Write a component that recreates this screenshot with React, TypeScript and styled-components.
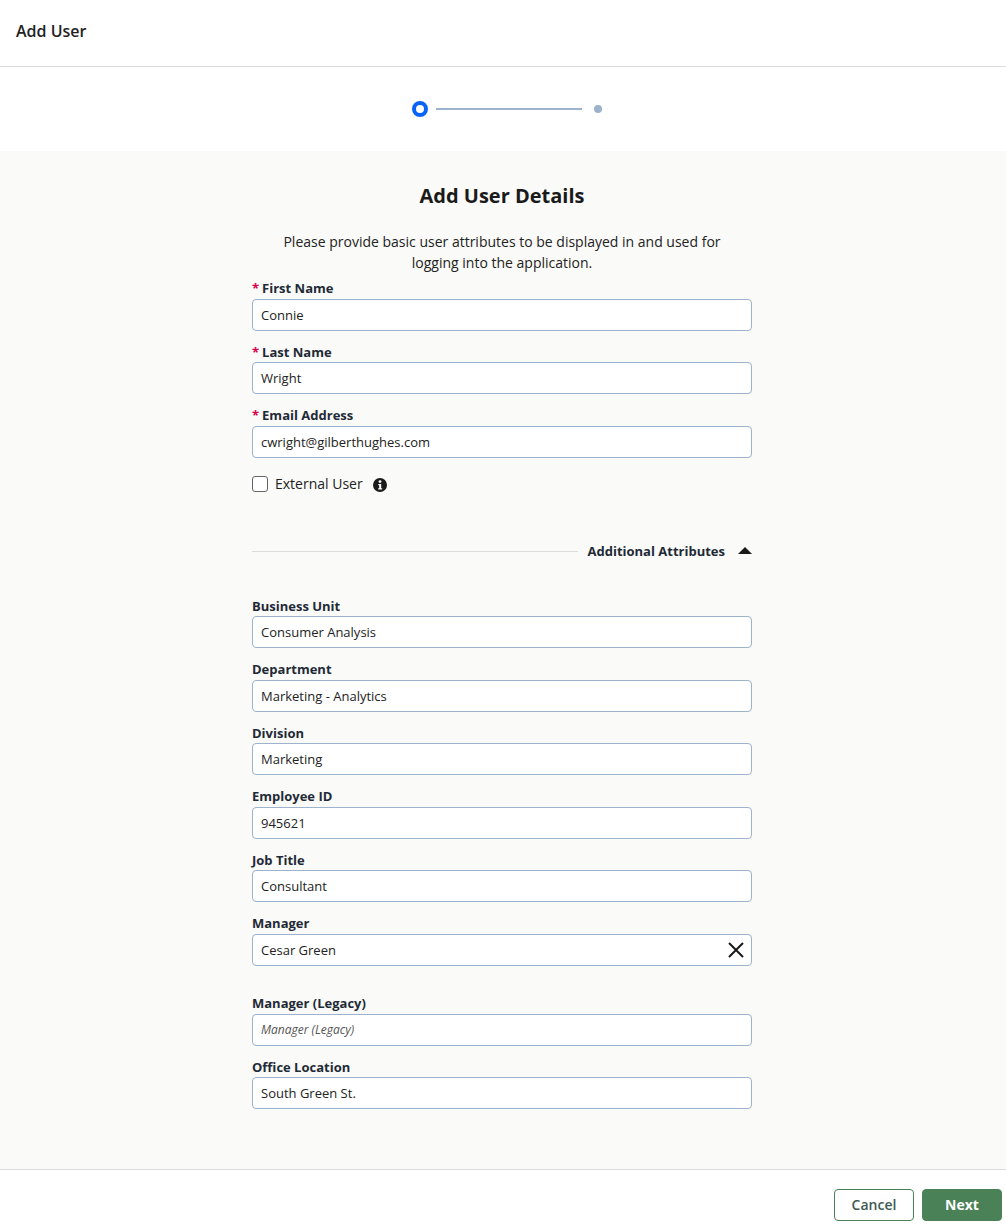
import styled, { createGlobalStyle } from "styled-components";

const GlobalStyle = createGlobalStyle`
  html, body {
    margin: 0;
    padding: 0;
    background: #fff;
    font-family: "Open Sans", "Noto Sans", sans-serif;
    color: #1a1a1a;
  }
  * { box-sizing: border-box; }
`;

const Page = styled.div`
  width: 1006px;
  height: 1232px;
  display: flex;
  flex-direction: column;
`;

const Header = styled.header`
  height: 67px;
  padding: 0 16px;
  display: flex;
  align-items: center;
  border-bottom: 1px solid #dcdcdc;
  font-size: 16px;
  font-weight: 600;
  padding-bottom: 5px;
  color: #222;
`;

const Stepper = styled.div`
  height: 84px;
  display: flex;
  align-items: center;
  justify-content: center;
  padding-left: 7px;
`;

const ActiveDot = styled.span`
  width: 16px;
  height: 16px;
  border-radius: 50%;
  border: 4px solid #0b63f6;
  background: #fff;
`;

const StepLine = styled.span`
  width: 146px;
  height: 2px;
  margin: 0 12px 0 8px;
  background: #9db2cc;
`;

const NextDot = styled.span`
  width: 8px;
  height: 8px;
  border-radius: 50%;
  background: #9db2cc;
`;

const Body = styled.main`
  flex: 1;
  padding-right: 2px;
  background: #fafaf8;
  display: flex;
  flex-direction: column;
  align-items: center;
`;

const Form = styled.div`
  width: 500px;
`;

const Title = styled.h1`
  margin: 31px 0 0;
  font-size: 20px;
  line-height: 28px;
  font-weight: 700;
  text-align: center;
  color: #1a1a1a;
`;

const Intro = styled.p`
  margin: 21px 0 6px;
  font-size: 14px;
  line-height: 21px;
  text-align: center;
  color: #222;
`;

const Field = styled.div<{ $gap?: number }>`
  height: 63.5px;
  margin-top: ${(p) => p.$gap ?? 0}px;
`;

const Label = styled.label`
  display: block;
  height: 19.5px;
  font-size: 13px;
  line-height: 18px;
  font-weight: 700;
  color: #1f2a37;
`;

const Star = styled.span`
  color: #d6004b;
  margin-right: 3px;
`;

const InputBox = styled.div<{ $placeholder?: boolean }>`
  height: 32px;
  padding: 0 8px;
  display: flex;
  align-items: center;
  justify-content: space-between;
  background: #fff;
  border: 1px solid #9db2cc;
  border-radius: 4px;
  font-size: ${(p) => (p.$placeholder ? "12px" : "13px")};
  font-style: ${(p) => (p.$placeholder ? "italic" : "normal")};
  color: ${(p) => (p.$placeholder ? "#555" : "#222")};
`;

const ClearIcon = styled.svg`
  width: 18px;
  height: 18px;
  margin-right: -2px;
`;

const CheckRow = styled.div`
  height: 20px;
  margin-top: 4px;
  display: flex;
  align-items: center;
  font-size: 14px;
  color: #222;
`;

const CheckBox = styled.span`
  width: 16px;
  height: 16px;
  margin-right: 7px;
  background: #fff;
  border: 1px solid #666;
  border-radius: 3px;
`;

const InfoIcon = styled.svg`
  width: 14px;
  height: 14px;
  margin: 2px 0 0 10px;
`;

const Divider = styled.div`
  height: 20px;
  margin: 47px 0 36px;
  display: flex;
  align-items: center;
`;

const Rule = styled.span`
  flex: 1;
  height: 1px;
  margin-top: 1px;
  background: #dcdcdc;
`;

const DividerLabel = styled.span`
  margin: 0 13px 0 10px;
  font-size: 13px;
  font-weight: 700;
  color: #1f2a37;
`;

const Caret = styled.span`
  width: 0;
  height: 0;
  border-left: 7px solid transparent;
  border-right: 7px solid transparent;
  border-bottom: 7px solid #1a1a1a;
`;

const Footer = styled.footer`
  height: 63px;
  padding: 19px 4px 0 0;
  display: flex;
  justify-content: flex-end;
  gap: 8px;
  border-top: 1px solid #dcdcdc;
`;

const Button = styled.button<{ $primary?: boolean }>`
  width: 80px;
  height: 32px;
  padding: 0 0 2px;
  font-family: inherit;
  font-size: 14px;
  font-weight: ${(p) => (p.$primary ? 700 : 600)};
  border-radius: 4px;
  border: 1px solid #4a8156;
  background: ${(p) => (p.$primary ? "#4a8156" : "#fff")};
  color: ${(p) => (p.$primary ? "#fff" : "#3d5a52")};
`;

const required = [
  { label: "First Name", value: "Connie" },
  { label: "Last Name", value: "Wright" },
  { label: "Email Address", value: "cwright@gilberthughes.com" },
];

const additional = [
  { label: "Business Unit", value: "Consumer Analysis" },
  { label: "Department", value: "Marketing - Analytics" },
  { label: "Division", value: "Marketing" },
  { label: "Employee ID", value: "945621" },
  { label: "Job Title", value: "Consultant" },
];

export default function App() {
  return (
    <Page>
      <GlobalStyle />
      <Header>Add User</Header>
      <Stepper>
        <ActiveDot />
        <StepLine />
        <NextDot />
      </Stepper>
      <Body>
        <Form>
          <Title>Add User Details</Title>
          <Intro>
            Please provide basic user attributes to be displayed in and used for
            <br />
            logging into the application.
          </Intro>
          {required.map((f) => (
            <Field key={f.label}>
              <Label>
                <Star>*</Star>
                {f.label}
              </Label>
              <InputBox>{f.value}</InputBox>
            </Field>
          ))}
          <CheckRow>
            <CheckBox />
            External User
            <InfoIcon viewBox="0 0 14 14">
              <circle cx="7" cy="7" r="7" fill="#1a1a1a" />
              <circle cx="7" cy="3.6" r="1.4" fill="#fff" />
              <path d="M5.3 6h2.9v4.2h1v1.4H5.2v-1.4h1V7.3h-.9z" fill="#fff" />
            </InfoIcon>
          </CheckRow>
          <Divider>
            <Rule />
            <DividerLabel>Additional Attributes</DividerLabel>
            <Caret />
          </Divider>
          {additional.map((f) => (
            <Field key={f.label}>
              <Label>{f.label}</Label>
              <InputBox>{f.value}</InputBox>
            </Field>
          ))}
          <Field>
            <Label>Manager</Label>
            <InputBox>
              Cesar Green
              <ClearIcon viewBox="0 0 18 18">
                <path d="M2 2l14 14M16 2L2 16" stroke="#1a1a1a" strokeWidth="2" fill="none" />
              </ClearIcon>
            </InputBox>
          </Field>
          <Field $gap={16.5}>
            <Label>Manager (Legacy)</Label>
            <InputBox $placeholder>Manager (Legacy)</InputBox>
          </Field>
          <Field>
            <Label>Office Location</Label>
            <InputBox>South Green St.</InputBox>
          </Field>
        </Form>
      </Body>
      <Footer>
        <Button>Cancel</Button>
        <Button $primary>Next</Button>
      </Footer>
    </Page>
  );
}
